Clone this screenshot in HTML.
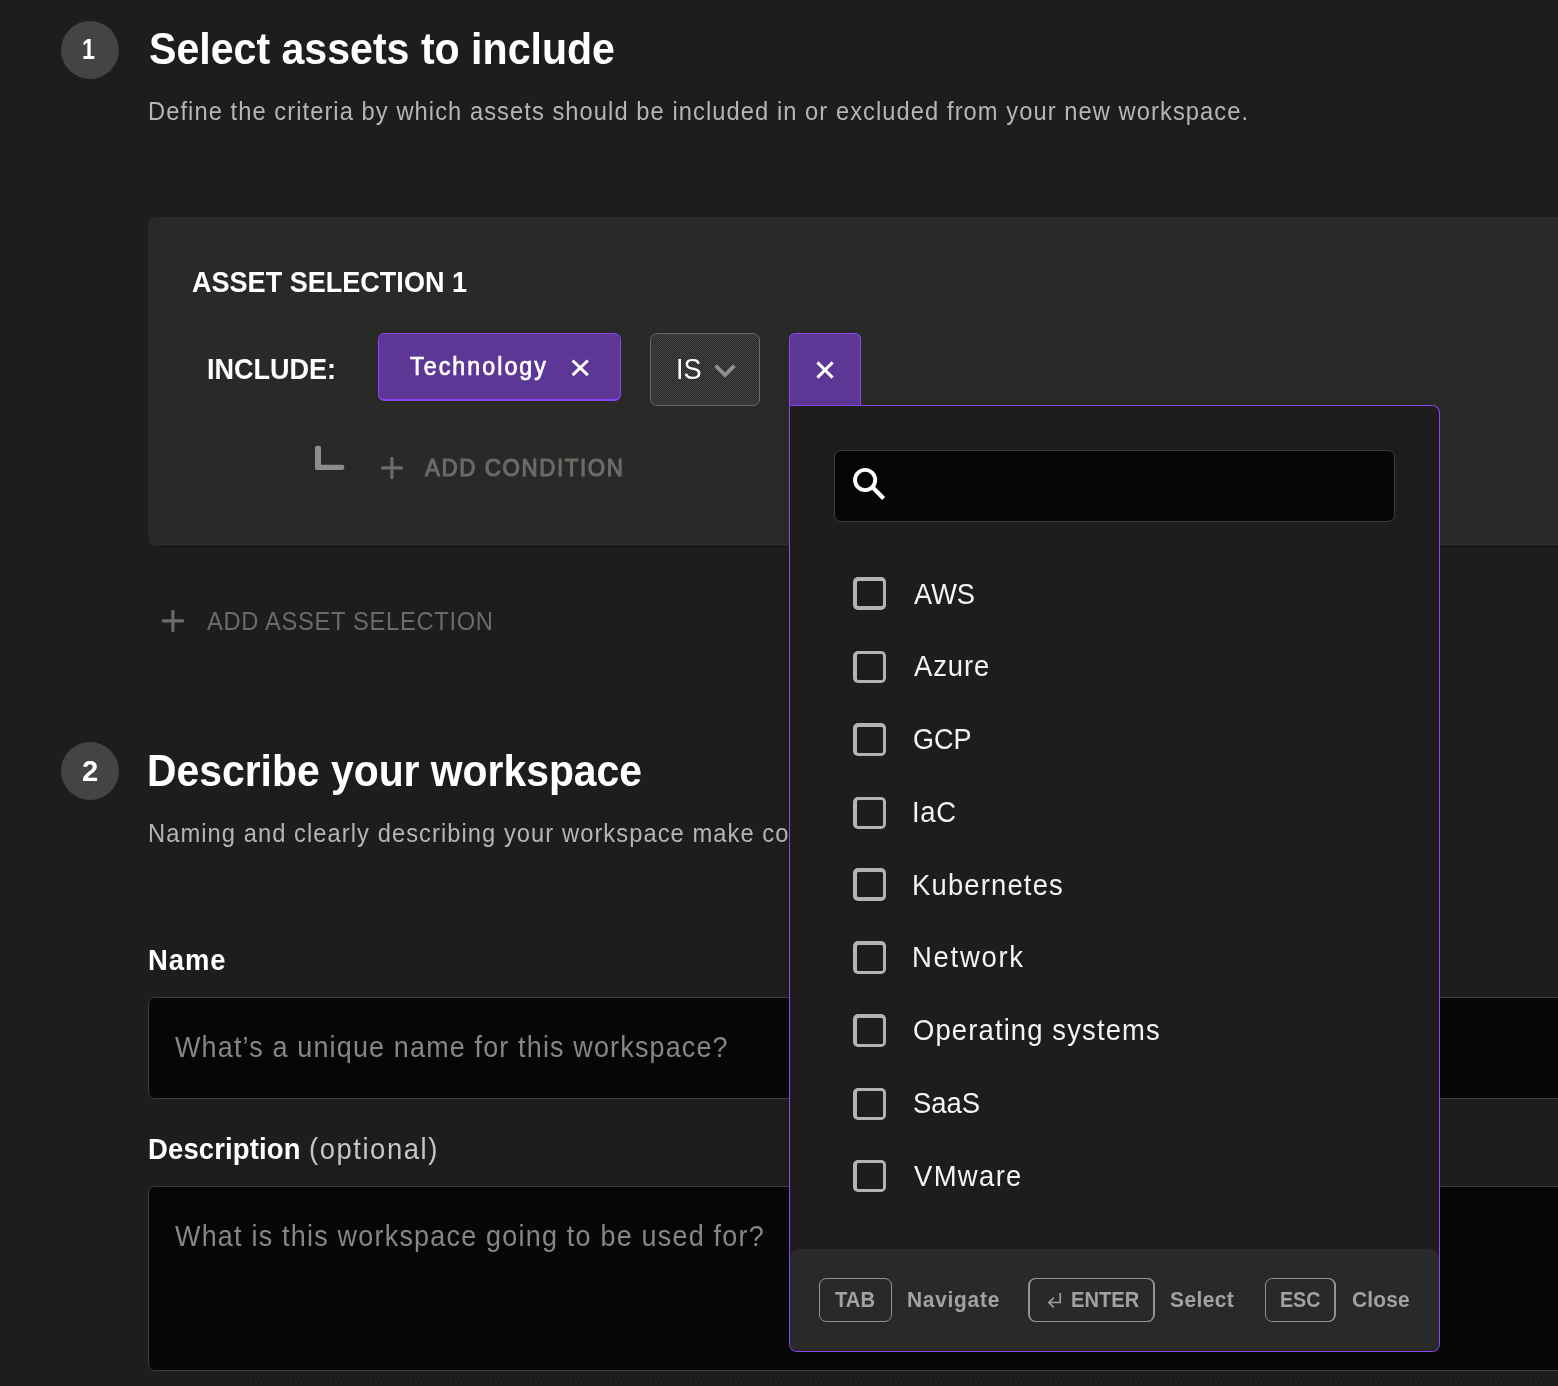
<!DOCTYPE html>
<html><head><meta charset="utf-8">
<style>
*{box-sizing:border-box;margin:0;padding:0}
html,body{width:1558px;height:1386px;overflow:hidden;background:#1e1d1c;font-family:"Liberation Sans",sans-serif;color:#fff}
.a{position:absolute}
.t{position:absolute;white-space:nowrap;line-height:1;transform-origin:0 0}
.circle{width:58px;height:58px;border-radius:50%;background:#444443;left:61px}
.panel{left:148px;top:217px;width:1420px;height:328.8px;background:#292927;border-radius:7px}
.dash{left:156px;top:546px;width:1410px;height:1px;background:repeating-linear-gradient(90deg,#0b0b0b 0 3px,transparent 3px 4px)}
.chip{left:378.1px;top:333px;width:242.8px;height:67.8px;background:#8b46fa;border-radius:6.5px}
.chip i,.xbtn i,.dd i,.key i{position:absolute;display:block}
.chip i{left:1.35px;top:1.35px;right:1.35px;bottom:1.35px;background:#5c3795;border-radius:5.2px}
.isbox{left:650px;top:333px;width:110px;height:73px;background:#363635 conic-gradient(#444442 25%,#292927 0 50%,#444442 0 75%,#292927 0) 0 0/2px 2px;border:1.2px solid #666664;border-radius:7px}
.xbtn{left:789px;top:332.9px;width:72.1px;height:73px;background:#8b46fa;border-radius:6px 6px 0 0}
.xbtn i{left:1.35px;top:1.35px;right:1.35px;bottom:0;background:#5c3795;border-radius:4.7px 4.7px 0 0}
.dd{left:788.9px;top:404.8px;width:651.5px;height:947.4px;background:#8b46fa;border-radius:0 8px 8px 8px}
.dd i{left:1.35px;top:1.35px;right:1.35px;bottom:1.35px;background:#1e1d1c;border-radius:0 6.7px 6.7px 6.7px}
.search{left:834px;top:450px;width:561px;height:71.5px;background:#060606;border:1.1px solid #3c3c3b;border-radius:7.2px}
.cb{left:853.4px;width:32.8px;height:32.8px;background:#b3b3b1;border-radius:5px}
.cb i{position:absolute;left:3.5px;top:3.5px;right:3.5px;bottom:3.5px;background:#1e1d1c;border-radius:1.5px}
.foot{left:790.2px;top:1249px;width:648.7px;height:101.7px;background:#292927;border-radius:9px 9px 7.5px 7.5px}
.key{top:1277.8px;height:44.4px;background:#939391;border-radius:7.5px}
.key i{left:1.4px;top:1.4px;right:1.4px;bottom:1.4px;background:#292927;border-radius:6.1px}
.inp{left:148px;width:1420px;background:#060606;border:1.1px solid #3e3e3d;border-radius:6.8px}
#root{position:absolute;left:0;top:0;width:1558px;height:1386px;will-change:transform}
</style></head><body><div id="root">

<div class="a circle" style="top:20.5px"></div>
<div class="a circle" style="top:742.2px"></div>
<div class="a panel"></div>
<div class="a dash"></div>
<div class="a chip"><i></i></div>
<svg class="a" style="left:570px;top:358px" width="20" height="20" viewBox="0 0 20 20"><path d="M2.6 2.5L17.8 17.2M17.8 2.5L2.6 17.2" stroke="#fff" stroke-width="3" fill="none"/></svg>
<div class="a isbox"></div>
<svg class="a" style="left:712px;top:362px" width="26" height="18" viewBox="0 0 26 18"><path d="M3.6 3.6L13 13L22.4 3.6" stroke="#8f8f8d" stroke-width="3.8" fill="none"/></svg>
<div class="a xbtn"><i></i></div>
<svg class="a" style="left:815px;top:359.5px" width="20" height="20" viewBox="0 0 20 20"><path d="M2.4 2.4L17.6 17.6M17.6 2.4L2.4 17.6" stroke="#fff" stroke-width="2.9" fill="none"/></svg>

<svg class="a" style="left:314px;top:445px" width="32" height="27" viewBox="0 0 32 27"><rect x="1" y="0.7" width="6" height="24.3" rx="2.2" fill="#8c8c8a"/><rect x="1" y="19.7" width="29.3" height="5.3" rx="2.2" fill="#8c8c8a"/></svg>
<svg class="a" style="left:381.2px;top:457.3px" width="22" height="22" viewBox="0 0 22 22"><path d="M10.9 1.2V20.6M1.2 10.9H20.6" stroke="#6c6c6a" stroke-width="3.1" stroke-linecap="round" fill="none"/></svg>
<svg class="a" style="left:162.1px;top:610.3px" width="22" height="22" viewBox="0 0 22 22"><path d="M10.9 1.2V20.6M1.2 10.9H20.6" stroke="#6c6c6a" stroke-width="3.1" stroke-linecap="round" fill="none"/></svg>

<div class="a inp" style="top:997px;height:101.5px"></div>
<div class="a inp" style="top:1186.3px;height:184.3px"></div>
<div class="a" style="left:220px;top:1377px;width:1338px;height:1px;background:repeating-linear-gradient(90deg,#0a0a0a 0 1px,transparent 1px 4px)"></div>
<div class="a" style="left:228px;top:1383px;width:1330px;height:1px;background:repeating-linear-gradient(90deg,#0a0a0a 0 1px,transparent 1px 5px)"></div>

<div class="t" style="left:148.7px;top:26.2px;font-size:45px;font-weight:700;color:#fff;transform:scaleX(0.9133)">Select assets to include</div>
<div class="t" style="left:147.9px;top:98.7px;font-size:25.5px;font-weight:400;color:#b5b5b3;transform:scaleX(0.9300);letter-spacing:1.136px">Define the criteria by which assets should be included in or excluded from your new workspace.</div>
<div class="t" style="left:191.9px;top:266.9px;font-size:30px;font-weight:700;color:#fff;transform:scaleX(0.9015)">ASSET SELECTION 1</div>
<div class="t" style="left:206.6px;top:354.3px;font-size:29.5px;font-weight:700;color:#fff;transform:scaleX(0.9161)">INCLUDE:</div>
<div class="t" style="left:409.5px;top:354.1px;font-size:25px;font-weight:400;color:#fff;transform:scaleX(0.9300);-webkit-text-stroke:0.7px #fff;letter-spacing:2.188px">Technology</div>
<div class="t" style="left:675.8px;top:353.9px;font-size:30px;font-weight:400;color:#fff;transform:scaleX(0.9039)">IS</div>
<div class="t" style="left:425.4px;top:455.9px;font-size:24px;font-weight:400;color:#6b6b69;transform:scaleX(0.9300);-webkit-text-stroke:1.1px #6b6b69;letter-spacing:1.736px">ADD CONDITION</div>
<div class="t" style="left:207.1px;top:608.7px;font-size:25.5px;font-weight:400;color:#6b6b69;transform:scaleX(0.9300);letter-spacing:0.735px">ADD ASSET SELECTION</div>
<div class="t" style="left:147.1px;top:748.2px;font-size:45px;font-weight:700;color:#fff;transform:scaleX(0.9079)">Describe your workspace</div>
<div class="t" style="left:147.9px;top:820.7px;font-size:25.5px;font-weight:400;color:#b5b5b3;transform:scaleX(0.9300);letter-spacing:1.136px">Naming and clearly describing your workspace make collaboration easier.</div>
<div class="t" style="left:148.3px;top:945.3px;font-size:29.5px;font-weight:700;color:#fff;transform:scaleX(0.9300);letter-spacing:1.034px">Name</div>
<div class="t" style="left:174.7px;top:1032.7px;font-size:29px;font-weight:400;color:#868684;transform:scaleX(0.9300);letter-spacing:1.238px">What’s a unique name for this workspace?</div>
<div class="t" style="left:148.3px;top:1134.3px;font-size:29.5px;font-weight:700;color:#fff;transform:scaleX(0.9300);letter-spacing:0.168px">Description</div>
<div class="t" style="left:308.5px;top:1134.3px;font-size:29.5px;font-weight:400;color:#c6c6c4;transform:scaleX(0.9300);letter-spacing:1.667px">(optional)</div>
<div class="t" style="left:174.9px;top:1221.7px;font-size:29px;font-weight:400;color:#868684;transform:scaleX(0.9300);letter-spacing:1.301px">What is this workspace going to be used for?</div>
<div class="t" style="left:82.3px;top:33.9px;font-size:30px;font-weight:700;color:#fff;transform:scaleX(0.7733)">1</div>
<div class="t" style="left:81.6px;top:755.9px;font-size:30px;font-weight:700;color:#fff;transform:scaleX(0.9733)">2</div>

<div class="a dd"><i></i></div>
<div class="a search"></div>
<svg class="a" style="left:850px;top:465px" width="40" height="40" viewBox="0 0 40 40"><circle cx="15.1" cy="15" r="10.1" stroke="#fff" stroke-width="3.9" fill="none"/><path d="M22.8 22.6L33.6 33.4" stroke="#fff" stroke-width="4.3"/></svg>

<div class="a cb" style="top:577.2px"><i></i></div>
<div class="a cb" style="top:650.6px"><i></i></div>
<div class="a cb" style="top:723.4px"><i></i></div>
<div class="a cb" style="top:796.5px"><i></i></div>
<div class="a cb" style="top:868px"><i></i></div>
<div class="a cb" style="top:941.3px"><i></i></div>
<div class="a cb" style="top:1014.4px"><i></i></div>
<div class="a cb" style="top:1087.5px"><i></i></div>
<div class="a cb" style="top:1159.7px"><i></i></div>

<div class="a foot"></div>
<div class="a key" style="left:819.1px;width:72.8px"><i></i></div>
<div class="a key" style="left:1028.2px;width:126.6px"><i></i></div>
<div class="a key" style="left:1265.1px;width:70.7px"><i></i></div>
<svg class="a" style="left:1046px;top:1291px" width="18" height="19" viewBox="0 0 18 19"><path d="M14.2 2.1V11.5H2.6M7.8 6.7L2.9 11.5L7.8 16.3" stroke="#9e9e9c" stroke-width="1.7" fill="none"/></svg>

<div class="t" style="left:835.4px;top:1289.2px;font-size:22.5px;font-weight:700;color:#a2a2a0;transform:scaleX(0.8980)">TAB</div>
<div class="t" style="left:906.7px;top:1289.2px;font-size:22.5px;font-weight:700;color:#a2a2a0;transform:scaleX(0.9300);letter-spacing:0.781px">Navigate</div>
<div class="t" style="left:1070.7px;top:1289.2px;font-size:22.5px;font-weight:700;color:#a2a2a0;transform:scaleX(0.8946)">ENTER</div>
<div class="t" style="left:1170.4px;top:1289.2px;font-size:22.5px;font-weight:700;color:#a2a2a0;transform:scaleX(0.9300);letter-spacing:0.468px">Select</div>
<div class="t" style="left:1279.9px;top:1289.2px;font-size:22.5px;font-weight:700;color:#a2a2a0;transform:scaleX(0.8708)">ESC</div>
<div class="t" style="left:1352.0px;top:1289.2px;font-size:22.5px;font-weight:700;color:#a2a2a0;transform:scaleX(0.9300);letter-spacing:0.187px">Close</div>
<div class="t" style="left:914.1px;top:579.3px;font-size:29.5px;font-weight:400;color:#f4f4f4;transform:scaleX(0.9232)">AWS</div>
<div class="t" style="left:914.1px;top:651.3px;font-size:29.5px;font-weight:400;color:#f4f4f4;transform:scaleX(0.9300);letter-spacing:0.970px">Azure</div>
<div class="t" style="left:913.2px;top:724.3px;font-size:29.5px;font-weight:400;color:#f4f4f4;transform:scaleX(0.9141)">GCP</div>
<div class="t" style="left:912.2px;top:797.3px;font-size:29.5px;font-weight:400;color:#f4f4f4;transform:scaleX(0.9300);letter-spacing:0.779px">IaC</div>
<div class="t" style="left:912.2px;top:870.3px;font-size:29.5px;font-weight:400;color:#f4f4f4;transform:scaleX(0.9300);letter-spacing:1.247px">Kubernetes</div>
<div class="t" style="left:912.2px;top:942.3px;font-size:29.5px;font-weight:400;color:#f4f4f4;transform:scaleX(0.9300);letter-spacing:1.866px">Network</div>
<div class="t" style="left:913.2px;top:1015.3px;font-size:29.5px;font-weight:400;color:#f4f4f4;transform:scaleX(0.9300);letter-spacing:1.211px">Operating systems</div>
<div class="t" style="left:913.2px;top:1088.3px;font-size:29.5px;font-weight:400;color:#f4f4f4;transform:scaleX(0.9292)">SaaS</div>
<div class="t" style="left:914.1px;top:1161.3px;font-size:29.5px;font-weight:400;color:#f4f4f4;transform:scaleX(0.9300);letter-spacing:1.454px">VMware</div>
</div></body></html>
